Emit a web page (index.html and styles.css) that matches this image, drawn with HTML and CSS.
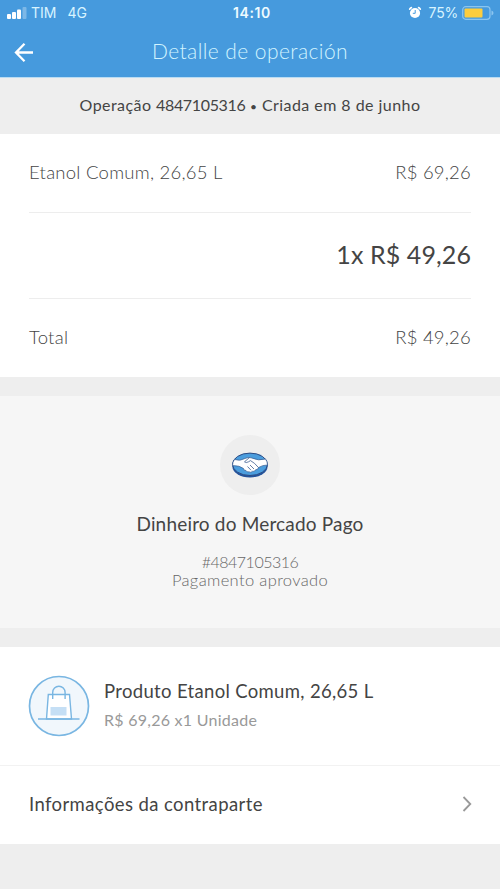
FILE: index.html
```html
<!DOCTYPE html>
<html lang="pt-BR">
<head>
<meta charset="utf-8">
<title>Detalle de operación</title>
<link rel="stylesheet" href="styles.css">
</head>
<body>
<header class="header">
  <div class="status">
    <div class="status-left">
      <svg class="signal" width="20" height="12" viewBox="0 0 20 12" fill="#fff"><rect x="0" y="7" width="4" height="5" rx="1"/><rect x="5" y="5" width="4" height="7" rx="1"/><rect x="10" y="2.500" width="4" height="9.500" rx="1"/><rect x="15.500" y="0" width="4" height="12" rx="1" opacity=".3"/></svg>
      <span class="carrier">TIM</span><span class="network">4G</span>
    </div>
    <span class="clock">14:10</span>
    <div class="status-right">
      <svg class="alarm" width="14" height="14" viewBox="0 0 14 14"><circle cx="7" cy="7" r="5.100" fill="#fff"/><path d="M1.600 3.200A5.500 5.500 0 0 1 3.500 1.500M10.500 1.500a5.500 5.500 0 0 1 1.900 1.700" stroke="#fff" stroke-width="1.500" fill="none" stroke-linecap="round"/><path d="M7.200 4v3.300H4.800" stroke="#469add" fill="none"/></svg>
      <span class="percent">75%</span>
      <svg class="battery" width="32" height="14" viewBox="0 0 32 14"><rect x=".7" y=".7" width="27.300" height="12.600" rx="3" fill="none" stroke="#8bc5ef" stroke-width="1.200"/><rect x="2.500" y="2.500" width="18" height="9" rx="1" fill="#fccd3d"/><path d="M29.500 4.500q2 .8 2 2.500t-2 2.500z" fill="#8bc5ef"/></svg>
    </div>
  </div>
  <div class="navbar">
    <svg class="back" width="20" height="20" viewBox="0 0 20 20" fill="none" stroke="#fff" stroke-width="2.300"><path d="M19 10.500H2M10.500 1.800 2 10.500l8.500 8.700"/></svg>
    <h1 class="title">Detalle de operación</h1>
  </div>
</header>
<div class="operation">Operação <span class="number">4847105316</span> <span class="dot">•</span> Criada em 8 de junho</div>
<section class="summary">
  <div class="row item"><span class="label">Etanol Comum, 26,65 L</span><span>R$ 69,26</span></div>
  <div class="row payment"><span>1x R$ 49,26</span></div>
  <div class="row total"><span class="label">Total</span><span>R$ 49,26</span></div>
</section>
<section class="method">
  <div class="method-badge">
    <svg width="38" height="26" viewBox="0 0 38 26"><ellipse cx="19" cy="14.200" rx="17.600" ry="11.300" fill="#24539c"/><ellipse cx="19" cy="12.300" rx="17.500" ry="11.200" fill="#4b9ddd" stroke="#2c4b83"/><path d="M3.500 7.500Q9 9.500 14 6.500l3-1 3 .3q8 3.500 14.500 1.200 2 2.500 2 6-5 0-9 2.500-.5 2.500-3 2.300-1 2.300-3 1.500-1.500 1.800-3.500.5-2 .7-3-1.300-2.500.2-2.500-2-3.500-3-11-3Q1.500 10 3.500 7.500z" fill="#fff" stroke="#3c5d91" stroke-width=".7"/><path d="m18.500 5.500-5 4.300q1.500 1.500 4 0l2-1.200q4 2 8 7M19 13l4 4M16.500 14.500l3.500 3.700" fill="none" stroke="#3c5d91" stroke-width=".8"/></svg>
  </div>
  <h2 class="method-name">Dinheiro do Mercado Pago</h2>
  <p class="method-id">#4847105316</p>
  <p class="method-state">Pagamento aprovado</p>
</section>
<section class="product">
  <svg class="bag" width="62" height="62" viewBox="0 0 62 62" fill="none" stroke="#79b6e2" stroke-width="1.400"><circle cx="31" cy="31" r="29.500" fill="#f1f7fc" stroke-width="1.700"/><path d="M20.300 19.500h21.200L43.500 44h-25z" fill="#fff"/><path d="M22.500 32h16v8.500h-16z" fill="#c5dff5" stroke="none"/><path d="M10 44h41.500M24.700 24v-6.500a6.200 6.200 0 0 1 12.400 0V24"/></svg>
  <div class="product-text">
    <h3 class="product-name">Produto Etanol Comum, 26,65 L</h3>
    <p class="product-price">R$ 69,26 x1 Unidade</p>
  </div>
</section>
<a class="counterpart"><span>Informações da contraparte</span>
  <svg width="10" height="16" viewBox="0 0 10 16" fill="none" stroke="#999" stroke-width="1.800"><path d="m1.500 1 6.800 7-6.800 7"/></svg>
</a>
</body>
</html>
```
FILE: styles.css
```css
* { box-sizing: border-box; }
body { margin: 0; background: #eee; color: #444; font-family: Lato, "Open Sans", sans-serif; }
h1, h2, h3, p { margin: 0; font-weight: 400; }
svg { display: block; flex: none; }

.header { height: 78px; background: #469add; border-bottom: 1px solid #b9dcf3; color: #fff; }
.status { height: 26px; display: grid; grid-template-columns: 1fr auto 1fr; align-items: center; padding: 0 6px 0 7px; font-family: Inter, sans-serif; font-size: 14px; line-height: 26px; color: #d8f4ff; }
.status-left, .status-right { display: flex; align-items: center; }
.status-right { justify-content: flex-end; }
.carrier { margin-left: 4px; }
.network { margin-left: 11px; }
.clock { padding-left: 3px; font-weight: 600; letter-spacing: .6px; color: #edfaff; }
.alarm { margin-right: 7px; margin-bottom: 1px; }
.percent { letter-spacing: -.2px; }
.battery { margin-left: 4px; margin-bottom: 1px; }
.navbar { height: 51px; display: grid; grid-template-columns: 20px 1fr 20px; align-items: center; padding: 0 14px; }
.title { text-align: center; font-size: 21px; font-weight: 300; line-height: 24px; letter-spacing: .42px; padding-bottom: 2px; color: #d2f4ff; }

.operation { height: 56px; text-align: center; font-size: 16px; line-height: 54px; letter-spacing: .45px; }
.number { letter-spacing: -.35px; }
.dot { font-size: 12px; }

.summary { padding: 0 29px; height: 243px; background: #fff; }
.row { display: flex; justify-content: space-between; align-items: center; padding-bottom: 2px; font-size: 18.500px; font-weight: 300; letter-spacing: .22px; }
.label { letter-spacing: .26px; }
.item { height: 79px; border-bottom: 1px solid #ededed; }
.payment { height: 86px; padding-bottom: 4px; justify-content: flex-end; border-bottom: 1px solid #ededed; font-size: 25px; font-weight: 400; letter-spacing: .1px; }
.total { height: 78px; }

.method { margin-top: 19px; height: 232px; padding-top: 39px; background: #f6f6f6; text-align: center; }
.method-badge { width: 60px; height: 60px; margin: 0 auto 17px; border-radius: 50%; background: #eee; display: flex; align-items: center; justify-content: center; }
.method-name { font-size: 19px; line-height: 24px; margin-bottom: 17px; letter-spacing: .18px; }
.method-id, .method-state { font-weight: 300; line-height: 18px; color: #666; }
.method-id { font-size: 16px; letter-spacing: -.5px; }
.method-state { font-size: 16.500px; letter-spacing: .36px; }

.product { margin-top: 19px; height: 119px; padding: 0 28px 2px; display: flex; align-items: center; gap: 14px; background: #fff; border-bottom: 1px solid #f2f2f2; }
.bag { margin-top: 2px; }
.product-name { font-size: 18.500px; line-height: 24px; letter-spacing: .33px; }
.product-price { margin-top: 6px; font-size: 16px; line-height: 22px; letter-spacing: .26px; color: #999; }
.counterpart { height: 78px; padding: 0 28px 2px 29px; display: flex; align-items: center; justify-content: space-between; background: #fff; font-size: 18.500px; letter-spacing: .4px; }
```
